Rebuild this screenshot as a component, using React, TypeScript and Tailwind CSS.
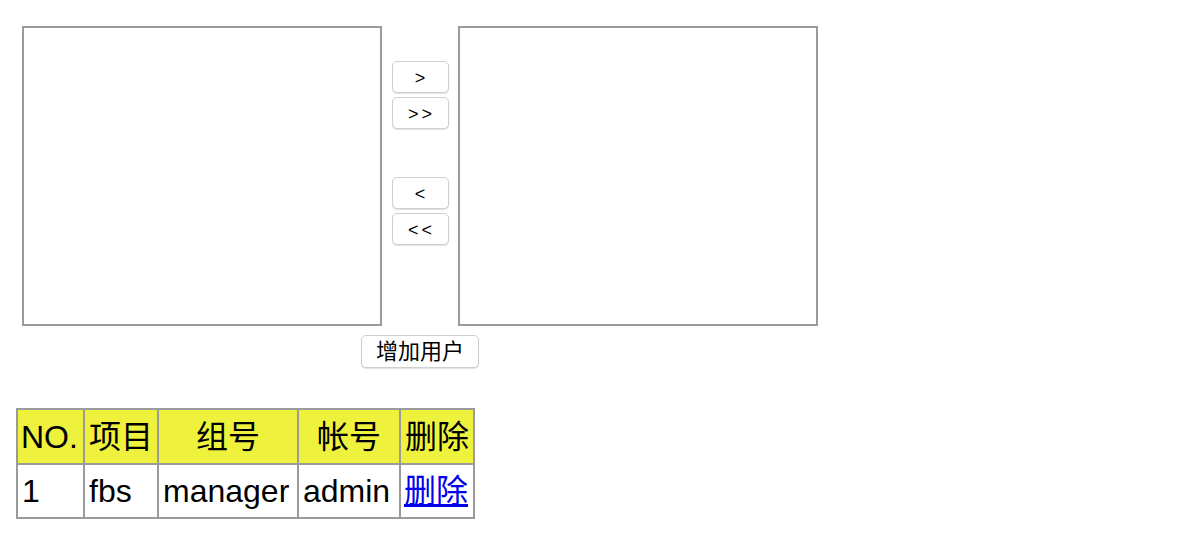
import React from "react";

const btn =
  "flex items-center justify-center rounded-[5px] border border-[#cfcfcf] bg-white shadow-[0_1px_1px_rgba(0,0,0,0.12)] text-black";

export default function App() {
  const font = { fontFamily: '"Liberation Sans", "Noto Sans CJK SC", sans-serif' };
  return (
    <div className="min-h-[542px] w-[1186px] bg-white" style={font}>
      <div className="flex flex-col pt-[26px] pl-[22px]">
        <div className="flex w-[796px]">
          <div className="h-[300px] w-[360px] border-2 border-[#9b9b9b] bg-white" />
          <div className="flex w-[76px] flex-col items-center pt-[35px]">
            <button className={`${btn} h-[32px] w-[57px] text-[18px] pt-[2px]`}>&gt;</button>
            <button className={`${btn} mt-[4px] h-[32px] w-[57px] text-[18px] tracking-[3px] pl-[3px] pt-[2px]`}>&gt;&gt;</button>
            <button className={`${btn} mt-[48px] h-[32px] w-[57px] text-[18px] pt-[2px]`}>&lt;</button>
            <button className={`${btn} mt-[4px] h-[32px] w-[57px] text-[18px] tracking-[3px] pl-[3px] pt-[2px]`}>&lt;&lt;</button>
          </div>
          <div className="h-[300px] w-[360px] border-2 border-[#9b9b9b] bg-white" />
        </div>
        <div className="mt-[9px] flex w-[796px] justify-center">
          <button className={`${btn} h-[33px] w-[118px] text-[22px]`}>增加用户</button>
        </div>
      </div>
      <div className="mt-[40px] pl-[16px]">
        <table className="w-[457px] table-fixed border-collapse border-2 border-[#9b9b9b] text-[32px] text-black">
          <colgroup>
            <col className="w-[67px]" />
            <col className="w-[74px]" />
            <col className="w-[140px]" />
            <col className="w-[102px]" />
            <col className="w-[74px]" />
          </colgroup>
          <thead>
            <tr className="h-[55px] bg-[#eef23c]">
              <th className="border-2 border-[#9b9b9b] px-[3px] text-left font-normal whitespace-nowrap">NO.</th>
              <th className="border-2 border-[#9b9b9b] px-[3px] font-normal">项目</th>
              <th className="border-2 border-[#9b9b9b] px-[3px] font-normal">组号</th>
              <th className="border-2 border-[#9b9b9b] px-[3px] font-normal">帐号</th>
              <th className="border-2 border-[#9b9b9b] px-[3px] font-normal">删除</th>
            </tr>
          </thead>
          <tbody>
            <tr className="h-[54px]">
              <td className="border-2 border-[#9b9b9b] px-[4px]">1</td>
              <td className="border-2 border-[#9b9b9b] px-[4px]">fbs</td>
              <td className="border-2 border-[#9b9b9b] px-[4px]">manager</td>
              <td className="border-2 border-[#9b9b9b] px-[4px]">admin</td>
              <td className="border-2 border-[#9b9b9b] px-[3px]">
                <a href="#" className="text-[#0000ee] underline">删除</a>
              </td>
            </tr>
          </tbody>
        </table>
      </div>
    </div>
  );
}
